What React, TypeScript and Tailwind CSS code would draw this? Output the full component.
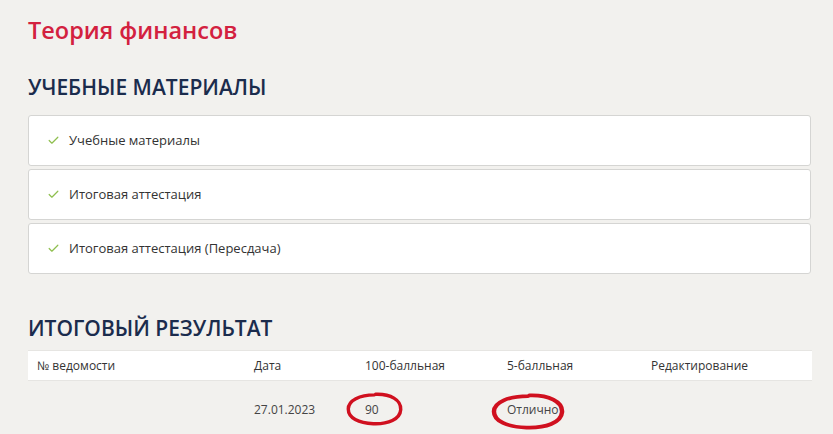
import { Check } from "lucide-react";

const materials = ["Учебные материалы", "Итоговая аттестация", "Итоговая аттестация (Пересдача)"];

const Ring = ({ className }: { className: string }) => (
  <svg className={className} viewBox="0 0 100 60" preserveAspectRatio="none">
    <path
      d="M52 4 C78 3 97 14 96 31 C95 48 74 57 48 56 C22 55 4 46 4 30 C4 15 24 5 50 5"
      fill="none"
      stroke="#d0101f"
      strokeWidth="6"
      strokeLinecap="round"
    />
  </svg>
);

export default function App() {
  return (
    <div className="min-h-[434px] w-[833px] overflow-hidden bg-[#f2f1ee] pt-[14px] pl-[28px] pr-[22px] font-['Open_Sans',sans-serif]">
      <h1 className="text-[23.5px] font-semibold leading-[32px] text-[#d3213f]">Теория финансов</h1>

      <h2 className="mt-[26px] text-[21px] font-semibold leading-[30px] text-[#1b2c4d]">УЧЕБНЫЕ МАТЕРИАЛЫ</h2>

      <div className="mt-[13px] flex flex-col gap-[3px]">
        {materials.map((m) => (
          <div
            key={m}
            className="flex h-[51px] items-center rounded-[3px] border border-[#d5d5d3] bg-white pl-[18px]"
          >
            <Check className="h-[13px] w-[13px] text-[#8fbf4f]" strokeWidth={2.25} />
            <span className="ml-[9px] text-[13px] text-[#333]">{m}</span>
          </div>
        ))}
      </div>

      <h2 className="mt-[39px] text-[21px] font-semibold leading-[30px] text-[#1b2c4d]">ИТОГОВЫЙ РЕЗУЛЬТАТ</h2>

      <table className="mt-[7px] w-[784px] text-[12px] text-[#333]">
        <thead>
          <tr className="h-[30px] border-y border-[#e6e5e2] bg-white text-left">
            <th className="w-[226px] pl-[9px] font-normal">№ ведомости</th>
            <th className="w-[111px] font-normal">Дата</th>
            <th className="w-[142px] font-normal">100-балльная</th>
            <th className="w-[144px] font-normal">5-балльная</th>
            <th className="font-normal">Редактирование</th>
          </tr>
        </thead>
        <tbody>
          <tr className="h-[58px]">
            <td></td>
            <td className="text-[#444]">27.01.2023</td>
            <td className="relative text-[#444]">
              <Ring className="absolute left-[-19px] top-[11px] h-[34px] w-[57px]" />
              90
            </td>
            <td className="relative text-[#444]">
              <Ring className="absolute left-[-16px] top-[12px] h-[37px] w-[74px]" />
              Отлично
            </td>
            <td></td>
          </tr>
        </tbody>
      </table>
    </div>
  );
}
